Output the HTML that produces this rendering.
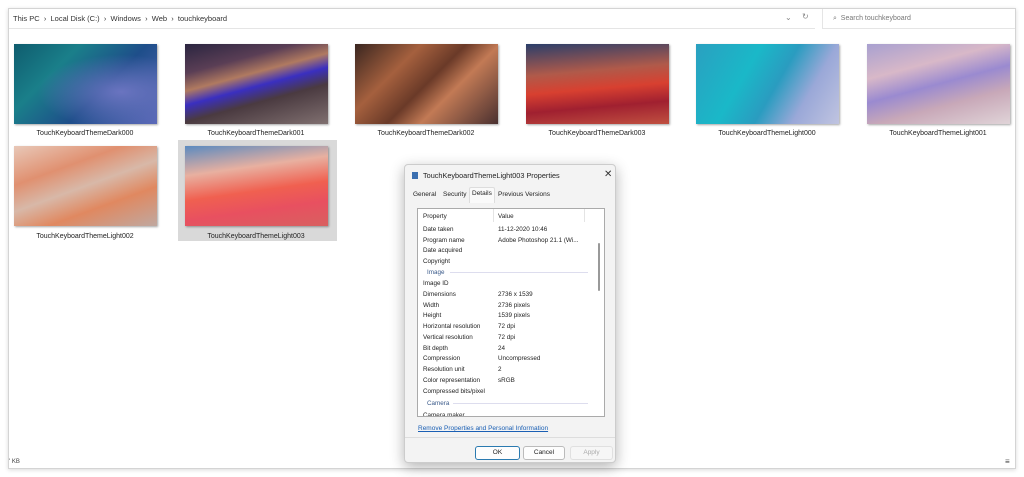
<!DOCTYPE html>
<html><head><meta charset="utf-8"><style>
*{box-sizing:border-box;margin:0;padding:0}
body{width:1024px;height:477px;background:#fff;font-family:"Liberation Sans",sans-serif;position:relative;overflow:hidden;color:#222}
.a{position:absolute}
.frame{left:8px;top:8px;width:1008px;height:461px;border:1px solid #d4d4d4;box-shadow:0 1px 4px rgba(0,0,0,.15)}
.addr{left:9px;top:9px;width:806px;height:20px;border-bottom:1px solid #e5e5e5;font-size:7.5px;line-height:20px;padding-left:4px;color:#333}
.search{left:822px;top:9px;width:193px;height:20px;border-left:1px solid #e5e5e5;border-bottom:1px solid #e5e5e5;font-size:7px;line-height:20px;padding-left:10px;color:#777}
.t{width:143px;height:80px;box-shadow:1px 1px 2px rgba(0,0,0,.35)}
.lbl{width:170px;text-align:center;font-size:7px;color:#222}
.dlg{left:404px;top:164px;width:212px;height:299px;background:#f3f3f3;border:1px solid #ccc;box-shadow:0 4px 14px rgba(0,0,0,.3);border-radius:4px}
.dlg .a{font-size:6.5px}
.list{left:12px;top:43px;width:188px;height:209px;background:#fff;border:1px solid #aaa;overflow:hidden}
.r{position:absolute;left:5px;font-size:6.3px;color:#222;white-space:nowrap}
.v{position:absolute;left:80px;font-size:6.3px;color:#222;white-space:nowrap}
.btn{height:14px;border:1px solid #bbb;background:#fdfdfd;border-radius:3px;text-align:center;line-height:12px;font-size:7px}
</style></head><body>
<div class="a frame"></div>
<div class="a addr">This PC &nbsp;›&nbsp; Local Disk (C:) &nbsp;›&nbsp; Windows &nbsp;›&nbsp; Web &nbsp;›&nbsp; touchkeyboard</div>
<div class="a" style="left:785px;top:13px;font-size:8px;color:#888">⌄</div>
<div class="a" style="left:802px;top:12px;font-size:8px;color:#888">↻</div>
<div class="a search">⌕ &nbsp;Search touchkeyboard</div>

<div class="a" style="left:178px;top:140px;width:159px;height:101px;background:#d9d9d9"></div>

<div class="a t" style="left:14px;top:44px;background:radial-gradient(ellipse at 75% 60%,#6a74c0,transparent 55%),linear-gradient(135deg,#0f5c6e 0%,#1a7f8a 30%,#1e4e8a 60%,#5a68b8 100%)"></div>
<div class="a t" style="left:185px;top:44px;background:linear-gradient(165deg,#2a2540 0%,#5a3e55 25%,#b07a60 40%,#3a2fc0 52%,#4a3a40 66%,#807070 100%)"></div>
<div class="a t" style="left:355px;top:44px;background:linear-gradient(135deg,#3a2620 0%,#a5603e 30%,#6a3a28 50%,#c27a55 65%,#4a3030 100%)"></div>
<div class="a t" style="left:526px;top:44px;background:linear-gradient(175deg,#2a3e6a 0%,#b05a4a 35%,#d84030 55%,#a02030 75%,#c05040 100%)"></div>
<div class="a t" style="left:696px;top:44px;background:linear-gradient(120deg,#2aa0c0 0%,#1ab8c8 35%,#2a9cc0 55%,#9aa8d8 75%,#c0c4e0 100%)"></div>
<div class="a t" style="left:867px;top:44px;background:linear-gradient(165deg,#a8a0d0 0%,#d8b8c8 30%,#9a8ad0 50%,#c8a8b8 70%,#e0d4d8 100%)"></div>
<div class="a t" style="left:14px;top:146px;background:linear-gradient(160deg,#e8c8b8 0%,#e09070 30%,#d8b8a8 50%,#e08860 70%,#c0a8a0 100%)"></div>
<div class="a t" style="left:185px;top:146px;background:linear-gradient(172deg,#5a8ac0 0%,#e8b0a0 30%,#f06050 55%,#e85060 75%,#d86060 100%)"></div>

<div class="a lbl" style="left:0px;top:130px">TouchKeyboardThemeDark000</div>
<div class="a lbl" style="left:171px;top:130px">TouchKeyboardThemeDark001</div>
<div class="a lbl" style="left:341px;top:130px">TouchKeyboardThemeDark002</div>
<div class="a lbl" style="left:512px;top:130px">TouchKeyboardThemeDark003</div>
<div class="a lbl" style="left:682px;top:130px">TouchKeyboardThemeLight000</div>
<div class="a lbl" style="left:853px;top:130px">TouchKeyboardThemeLight001</div>
<div class="a lbl" style="left:0px;top:233px">TouchKeyboardThemeLight002</div>
<div class="a lbl" style="left:171px;top:233px">TouchKeyboardThemeLight003</div>

<div class="a" style="left:9px;top:459px;font-size:6px;color:#444">' KB</div>
<div class="a" style="left:1005px;top:457px;font-size:8px;color:#444">≡</div>

<div class="a dlg">
 <div class="a" style="left:7px;top:7px;width:6px;height:7px;background:#3b6fb0"></div>
 <div class="a" style="left:18px;top:6px;font-size:7.3px">TouchKeyboardThemeLight003 Properties</div>
 <div class="a" style="left:199px;top:4px;font-size:10px;color:#333">✕</div>
 <div class="a" style="left:8px;top:26px">General</div>
 <div class="a" style="left:38px;top:26px">Security</div>
 <div class="a" style="left:64px;top:22px;width:26px;height:16px;background:#fafafa;border:1px solid #ddd;border-bottom:none;border-radius:2px 2px 0 0"></div>
 <div class="a" style="left:67px;top:25px">Details</div>
 <div class="a" style="left:93px;top:26px">Previous Versions</div>
 <div class="a list">
  <div class="r" style="top:4px">Property</div><div class="v" style="top:4px">Value</div>
  <div class="a" style="left:75px;top:0;width:1px;height:13px;background:#e4e4e4"></div>
  <div class="a" style="left:166px;top:0;width:1px;height:13px;background:#e4e4e4"></div>
  <div class="r" style="top:17px">Date taken</div><div class="v" style="top:17px">11-12-2020 10:46</div>
  <div class="r" style="top:28px">Program name</div><div class="v" style="top:28px">Adobe Photoshop 21.1 (Wi...</div>
  <div class="r" style="top:38px">Date acquired</div>
  <div class="r" style="top:49px">Copyright</div>
  <div class="r" style="top:60px;left:9px;color:#3a5a8a">Image</div>
  <div class="a" style="left:32px;top:63px;width:138px;height:1px;background:#dde"></div>
  <div class="r" style="top:71px">Image ID</div>
  <div class="r" style="top:82px">Dimensions</div><div class="v" style="top:82px">2736 x 1539</div>
  <div class="r" style="top:93px">Width</div><div class="v" style="top:93px">2736 pixels</div>
  <div class="r" style="top:103px">Height</div><div class="v" style="top:103px">1539 pixels</div>
  <div class="r" style="top:114px">Horizontal resolution</div><div class="v" style="top:114px">72 dpi</div>
  <div class="r" style="top:125px">Vertical resolution</div><div class="v" style="top:125px">72 dpi</div>
  <div class="r" style="top:136px">Bit depth</div><div class="v" style="top:136px">24</div>
  <div class="r" style="top:146px">Compression</div><div class="v" style="top:146px">Uncompressed</div>
  <div class="r" style="top:157px">Resolution unit</div><div class="v" style="top:157px">2</div>
  <div class="r" style="top:168px">Color representation</div><div class="v" style="top:168px">sRGB</div>
  <div class="r" style="top:179px">Compressed bits/pixel</div>
  <div class="r" style="top:191px;left:9px;color:#3a5a8a">Camera</div>
  <div class="a" style="left:35px;top:194px;width:135px;height:1px;background:#dde"></div>
  <div class="r" style="top:203px">Camera maker</div>
  <div class="a" style="left:180px;top:34px;width:2px;height:48px;background:#999;border-radius:1px"></div>
 </div>
 <div class="a" style="left:13px;top:260px;color:#1a5fb4;text-decoration:underline">Remove Properties and Personal Information</div>
 <div class="a" style="left:0;top:272px;width:210px;height:1px;background:#ddd"></div>
 <div class="a btn" style="left:70px;top:281px;width:45px;border-color:#2a7ab0">OK</div>
 <div class="a btn" style="left:118px;top:281px;width:42px">Cancel</div>
 <div class="a btn" style="left:165px;top:281px;width:43px;color:#aaa;background:#f6f6f6;border-color:#e0e0e0">Apply</div>
</div>
</body></html>
